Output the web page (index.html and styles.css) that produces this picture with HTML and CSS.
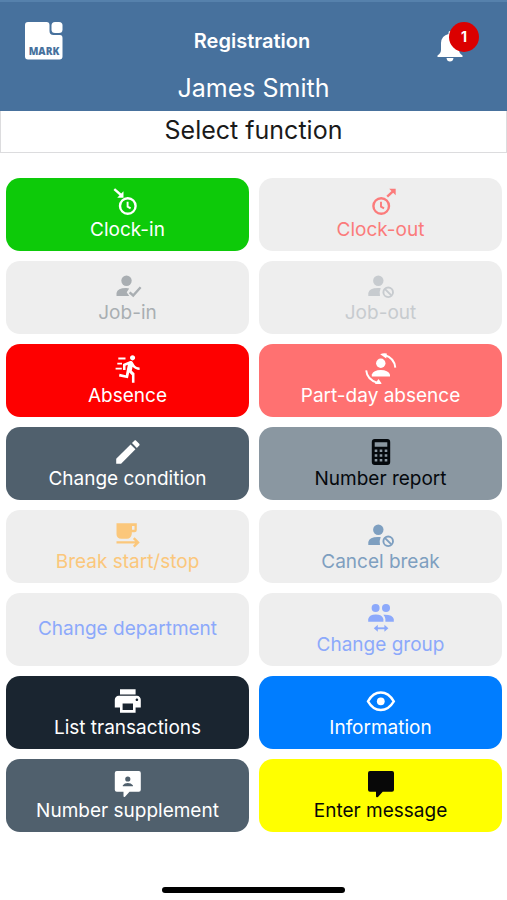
FILE: index.html
```
<!DOCTYPE html>
<html lang="en">
<head>
<meta charset="utf-8">
<meta name="viewport" content="width=device-width, initial-scale=1">
<title>Registration</title>
<link rel="stylesheet" href="styles.css">
</head>
<body>
<header class="header">
  <div class="bar">
    <div class="logo">
      <svg class="logo-shape" viewBox="0 0 38 38" aria-hidden="true"><path d="M3 0H21.500Q24.500 0 24.500 3V9Q24.500 13 28.500 13H35Q37.500 13 37.500 16V34.500Q37.500 37.500 34.500 37.500H3Q0 37.500 0 34.500V3Q0 0 3 0Z"/><rect x="26.500" y="0" width="11" height="11" rx="3.500"/></svg>
      <span class="logo-text">MARK</span>
    </div>
    <h1 class="title">Registration</h1>
    <button class="bell" type="button" aria-label="Notifications">
      <svg class="bell-icon" viewBox="0 0 26 32" aria-hidden="true"><path d="M13 1Q14.500 1 14.500 3V4Q21.500 5.500 22 13V20Q22 23 25.500 25.500V27H.500V25.500Q4 23 4 20V13Q4.500 5.500 11.500 4V3Q11.500 1 13 1ZM9.500 28H16.500Q16 31.500 13 31.500T9.500 28Z"/></svg>
      <span class="badge">1</span>
    </button>
  </div>
  <p class="name">James Smith</p>
</header>
<h2 class="prompt">Select function</h2>
<main class="grid">
  <button class="tile green" type="button">
    <svg class="icon" viewBox="0 0 32 32" aria-hidden="true"><g class="line"><circle cx="15.800" cy="20" r="7.800"/><path class="thin" d="M15.600 15.800V20.600L18.600 22.400"/><path d="M2.300 3.200L9 9"/></g><path d="M11.500 5.200V11.700H5.200Z"/></svg>
    <span>Clock-in</span>
  </button>
  <button class="tile pale coral" type="button">
    <svg class="icon" viewBox="0 0 32 32" aria-hidden="true"><g class="line"><circle cx="16.200" cy="20" r="7.800"/><path class="thin" d="M16 15.800V20.600L19 22.400"/><path d="M22.200 10.600L28.500 4.800"/></g><path d="M24.200 2.700H30.700V9.200Z"/></svg>
    <span>Clock-out</span>
  </button>
  <button class="tile pale gray" type="button">
    <svg class="icon" viewBox="0 0 32 32" aria-hidden="true"><circle cx="14.500" cy="11.700" r="5.200"/><path d="M4.500 27V24Q5.500 19 14 19Q16 19 17.200 19.600L14.700 23.200L17.200 27Z"/><path class="line" d="M17.600 23.300L21.200 26.500L28.600 18.300"/></svg>
    <span>Job-in</span>
  </button>
  <button class="tile pale silver" type="button">
    <svg class="icon" viewBox="0 0 32 32" aria-hidden="true"><circle cx="13.300" cy="11.700" r="5.200"/><path d="M3.300 27V24Q4.300 19 13 19H15.700Q14 23 15 27Z"/><g class="line thin"><circle cx="23.200" cy="23.300" r="4.800"/><path d="M19.800 19.900L26.600 26.700"/></g></svg>
    <span>Job-out</span>
  </button>
  <button class="tile red" type="button">
    <svg class="icon" viewBox="0 0 32 32" aria-hidden="true"><path transform="translate(3.300 1.400) scale(1.280)" d="M13.490 5.480c1.100 0 2-.9 2-2s-.9-2-2-2-2 .9-2 2 .9 2 2 2zm-3.600 13.900l1-4.400 2.100 2v6h2v-7.500l-2.100-2 .6-3c1.300 1.500 3.300 2.500 5.500 2.500v-2c-1.900 0-3.500-1-4.300-2.400l-1-1.600c-.4-.6-1-1-1.700-1-.3 0-.5.1-.8.1l-5.200 2.200v4.700h2v-3.400l1.800-.7-1.600 8.100-4.900-1-.4 2 7 1.400z"/><path class="line thin" d="M6.300 6.500H13.500M5.300 11.600H10M3.600 16.600H9.800"/></svg>
    <span>Absence</span>
  </button>
  <button class="tile salmon" type="button">
    <svg class="icon" viewBox="0 0 32 32" aria-hidden="true"><circle cx="15.800" cy="11.300" r="4.700"/><path d="M6.800 24.500V22.500Q8.500 18 15.800 18T25 22.500V24.500Z"/><path class="line thin" d="M19.500 3Q29.500 6 30.300 15.700M1.200 18.300Q2 27.500 12.500 30.800"/><path d="M15.200 2.200Q18.500.8 21.800 1.600L21.300 6.400ZM16.700 31.600Q13.500 33 10 31.700L13.500 27Z"/></svg>
    <span>Part-day absence</span>
  </button>
  <button class="tile slate" type="button">
    <svg class="icon" viewBox="0 0 32 32" aria-hidden="true"><path transform="translate(.3 1.400) scale(1.300)" d="M3 17.250V21h3.750L17.810 9.940l-3.750-3.750L3 17.250zM20.710 7.040c.39-.39.39-1.020 0-1.410l-2.340-2.340c-.39-.39-1.020-.39-1.410 0l-1.830 1.830 3.750 3.750 1.830-1.830z"/></svg>
    <span>Change condition</span>
  </button>
  <button class="tile steel" type="button">
    <svg class="icon" viewBox="0 0 32 32" aria-hidden="true"><path fill-rule="evenodd" d="M9.800 4H22.200Q25.200 4 25.200 7V27Q25.200 30 22.200 30H9.800Q6.800 30 6.800 27V7Q6.800 4 9.800 4ZM9.700 7.200V11.800H22.300V7.200ZM9.700 14.500V17H12.300V14.500ZM14.700 14.500V17H17.300V14.500ZM19.700 14.500V17H22.300V14.500ZM9.700 19.200V21.700H12.300V19.200ZM14.700 19.200V21.700H17.300V19.200ZM19.700 19.200V21.700H22.300V19.200ZM9.700 24V26.500H12.300V24ZM14.700 24V26.500H17.300V24ZM19.700 24V26.500H22.300V24Z"/></svg>
    <span>Number report</span>
  </button>
  <button class="tile pale orange" type="button">
    <svg class="icon" viewBox="0 0 32 32" aria-hidden="true"><path fill-rule="evenodd" d="M4.500 5.300H24.800V12Q24.800 14.300 22.500 14.300H19.800V16Q19 20.700 15 20.700H9.500Q4.500 20.700 4.500 16ZM20 8V11.800H22.500V8Z"/><path class="line" d="M4.500 24.400H25M21.800 20.200L26 24.400L21.800 28.600"/></svg>
    <span>Break start/stop</span>
  </button>
  <button class="tile pale blue-gray" type="button">
    <svg class="icon" viewBox="0 0 32 32" aria-hidden="true"><circle cx="13.300" cy="11.700" r="5.200"/><path d="M3.300 27V24Q4.300 19 13 19H15.700Q14 23 15 27Z"/><g class="line thin"><circle cx="23.200" cy="23.300" r="4.800"/><path d="M19.800 19.900L26.600 26.700"/></g></svg>
    <span>Cancel break</span>
  </button>
  <button class="tile pale periwinkle" type="button"><span>Change department</span></button>
  <button class="tile pale periwinkle" type="button">
    <svg class="icon" viewBox="0 0 32 32" aria-hidden="true"><circle cx="10.600" cy="7" r="4"/><circle cx="21" cy="7" r="4"/><path d="M3.200 20.800V18Q4.500 13.600 10.800 13.600T18.400 18V20.800ZM18.300 13.700Q27.500 13.200 28.800 18V20.800H20.400V18Q20.200 15.500 18.300 13.700Z"/><path class="line thin" d="M11 27.300H21"/><path d="M8.800 27.300L12.800 23.800V30.800ZM23.400 27.300L19.400 23.800V30.800Z"/></svg>
    <span>Change group</span>
  </button>
  <button class="tile navy" type="button">
    <svg class="icon" viewBox="0 0 32 32" aria-hidden="true"><path transform="translate(.2 1.400) scale(1.300)" d="M19 8H5c-1.660 0-3 1.340-3 3v6h4v4h12v-4h4v-6c0-1.660-1.340-3-3-3zm-3 11H8v-5h8v5zm3-7c-.55 0-1-.45-1-1s.45-1 1-1 1 .45 1 1-.45 1-1 1zm-1-9H6v4h12V3z"/></svg>
    <span>List transactions</span>
  </button>
  <button class="tile blue" type="button">
    <svg class="icon" viewBox="0 0 32 32" aria-hidden="true"><path class="line" d="M3 17.300Q8 8.500 15.800 8.500T28.800 17.300Q23.600 26 15.800 26T3 17.300Z"/><circle cx="15.800" cy="17.300" r="3.900"/></svg>
    <span>Information</span>
  </button>
  <button class="tile slate" type="button">
    <svg class="icon" viewBox="0 0 32 32" aria-hidden="true"><path fill-rule="evenodd" d="M4.800 4H26.800Q28.800 4 28.800 6V22.700Q28.800 24.700 26.800 24.700H17.500L13 29.700Q11.500 30.500 11.500 29V24.700H4.800Q2.800 24.700 2.800 22.700V6Q2.800 4 4.800 4ZM15.800 9.400A2.600 2.600 0 1 0 15.800 14.600A2.600 2.600 0 1 0 15.800 9.400ZM10.800 19.200H20.900V18.200Q19 16 15.800 16T10.800 18.200Z"/></svg>
    <span>Number supplement</span>
  </button>
  <button class="tile yellow" type="button">
    <svg class="icon" viewBox="0 0 32 32" aria-hidden="true"><path d="M5 4H27Q29 4 29 6V22.700Q29 24.700 27 24.700H17.700L13.200 29.700Q11 31 11 29V24.700H5Q3 24.700 3 22.700V6Q3 4 5 4Z"/></svg>
    <span>Enter message</span>
  </button>
</main>
<div class="home"></div>
</body>
</html>
```
FILE: styles.css
```
* {
  box-sizing: border-box;
}

body {
  margin: 0;
  min-height: 100vh;
  display: flex;
  flex-direction: column;
  background: #fff;
  color: #1a1a1a;
  font-family: Inter, "Liberation Sans", sans-serif;
}

button {
  border: 0;
  padding: 0;
  background: none;
  color: inherit;
  font: inherit;
}

.header {
  border-top: 2px solid #5681ac;
  background: #47719d;
  color: #fff;
  padding-bottom: 7px;
}

.bar {
  display: grid;
  grid-template-columns: 1fr auto 1fr;
  align-items: center;
  padding: 20px 28px 12px 25px;
}

.logo {
  position: relative;
  width: 38px;
  height: 38px;
}

.logo-shape {
  display: block;
  width: 38px;
  height: 38px;
  fill: #fff;
}

.logo-text {
  position: absolute;
  left: 0;
  right: 0;
  bottom: 3px;
  color: #47719d;
  font: 800 10px/12px "Open Sans", sans-serif;
  text-align: center;
}

.title {
  margin: 0;
  font-size: 20px;
  font-weight: 600;
  line-height: 38px;
}

.bell {
  position: relative;
  justify-self: end;
  width: 42px;
  height: 38px;
}

.bell-icon {
  display: block;
  width: 26px;
  height: 32px;
  margin-top: 8px;
  fill: #fff;
}

.badge {
  position: absolute;
  top: 0;
  right: 0;
  width: 30px;
  height: 30px;
  border-radius: 50%;
  background: #db0000;
  font-size: 14px;
  font-weight: 700;
  line-height: 30px;
  text-align: center;
}

.name {
  margin: 0;
  font-size: 25px;
  line-height: 32px;
  text-align: center;
}

.prompt {
  margin: 0;
  padding: 3px 0 6px;
  border: 1px solid #dcdcde;
  border-top: 0;
  font-size: 25px;
  font-weight: 400;
  line-height: 32px;
  text-align: center;
}

.grid {
  display: grid;
  grid-template-columns: 1fr 1fr;
  gap: 10px;
  padding: 25px 5px 0 6px;
}

.tile {
  display: flex;
  flex-direction: column;
  align-items: center;
  justify-content: center;
  min-height: 73px;
  padding-bottom: 1px;
  border-radius: 14px;
  color: #fff;
  font-size: 19px;
  line-height: 24px;
}

.icon {
  width: 32px;
  height: 32px;
  fill: currentColor;
}

.line {
  fill: none;
  stroke: currentColor;
  stroke-width: 2.400;
}

.thin {
  stroke-width: 1.900;
}

.green { background: #0dca09; }
.red { background: #fe0000; }
.salmon { background: #ff7171; }
.slate { background: #50606d; }
.steel { background: #8a97a1; color: #05090d; }
.navy { background: #1a2530; }
.blue { background: #007dff; }
.yellow { background: #ff0; color: #080808; }
.pale { background: #eee; }
.coral { color: #fb7b7b; }
.gray { color: #a9aeb2; }
.silver { color: #c7cbcf; }
.orange { color: #fbc77b; }
.blue-gray { color: #7e9fc0; }
.periwinkle { color: #8ca9fb; }

.home {
  width: 36%;
  height: 6px;
  margin: auto auto 7px;
  border-radius: 3px;
  background: #000;
}
```
